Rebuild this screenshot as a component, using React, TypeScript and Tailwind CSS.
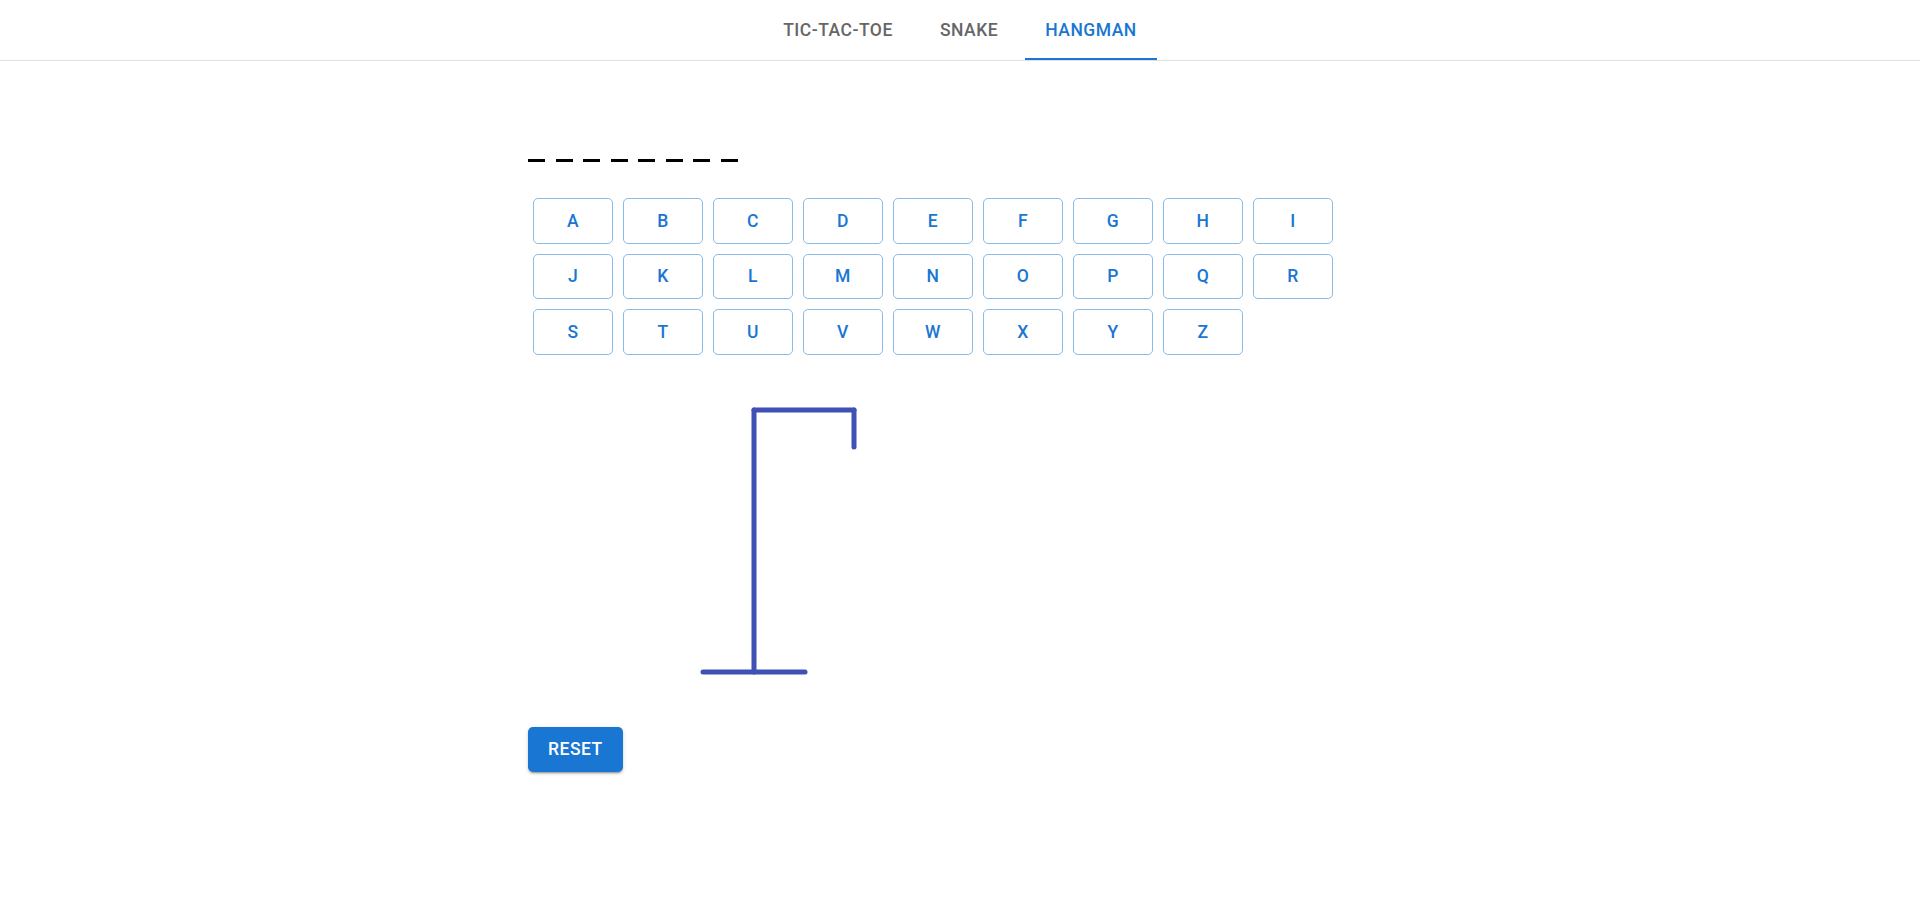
import { useState } from 'react'

const TABS = ['Tic-Tac-Toe', 'Snake', 'Hangman']
const WORD_LENGTH = 8
const ALPHABET = 'ABCDEFGHIJKLMNOPQRSTUVWXYZ'.split('')

// Gallows drawn at the current "no wrong guesses" stage
function Gallows() {
  return (
    <svg width="340" height="300" viewBox="0 0 340 300" className="block">
      <g stroke="#3f51b5" strokeWidth="5" strokeLinecap="round" strokeLinejoin="miter" fill="none">
        <line x1="175" y1="282" x2="277" y2="282" />
        <line x1="226" y1="282" x2="226" y2="20" />
        <line x1="226" y1="20" x2="326" y2="20" />
        <line x1="326" y1="20" x2="326" y2="57" />
      </g>
    </svg>
  )
}

export default function App() {
  const [tab, setTab] = useState(2)
  const [guessed, setGuessed] = useState<string[]>([])

  return (
    <div className="min-h-screen bg-white font-['Roboto','Liberation_Sans',sans-serif]">
      {/* Tabs */}
      <div className="flex justify-center border-b border-[#e0e0e0]">
        {TABS.map((t, i) => (
          <button
            key={t}
            type="button"
            onClick={() => setTab(i)}
            className={`relative h-[60px] min-w-[112.5px] px-[20px] text-[17.5px] font-medium uppercase tracking-[0.02857em] ${
              tab === i ? 'text-[#1976d2]' : 'text-[#666666]'
            }`}
          >
            {t}
            {tab === i && <span className="absolute bottom-0 left-0 right-0 h-[2.5px] bg-[#1976d2]" />}
          </button>
        ))}
      </div>

      <div className="mx-auto w-[864px] pt-[98px] pb-10">
        {/* Word */}
        <div className="flex gap-[10.5px]">
          {Array.from({ length: WORD_LENGTH }).map((_, i) => (
            <div key={i} className="h-[2.5px] w-[17px] bg-black" />
          ))}
        </div>

        {/* Keyboard */}
        <div className="mt-[31.5px] flex w-[810px] flex-wrap">
          {ALPHABET.map((l) => (
            <button
              key={l}
              type="button"
              disabled={guessed.includes(l)}
              onClick={() => setGuessed([...guessed, l])}
              className="m-[5px] flex h-[45.5px] w-[80px] items-center justify-center rounded-[5px] border border-[#8bbbe9] text-[17.5px] font-medium tracking-[0.02857em] text-[#1976d2]"
            >
              {l}
            </button>
          ))}
        </div>

        <div className="mt-[30px]">
          <Gallows />
        </div>

        <button
          type="button"
          onClick={() => setGuessed([])}
          className="mt-[37px] h-[45.5px] rounded-[5px] bg-[#1976d2] px-[20px] text-[17.5px] font-medium uppercase tracking-[0.02857em] text-white shadow-[0_3px_1px_-2px_rgba(0,0,0,0.2),0_2px_2px_0_rgba(0,0,0,0.14),0_1px_5px_0_rgba(0,0,0,0.12)]"
        >
          Reset
        </button>
      </div>
    </div>
  )
}
